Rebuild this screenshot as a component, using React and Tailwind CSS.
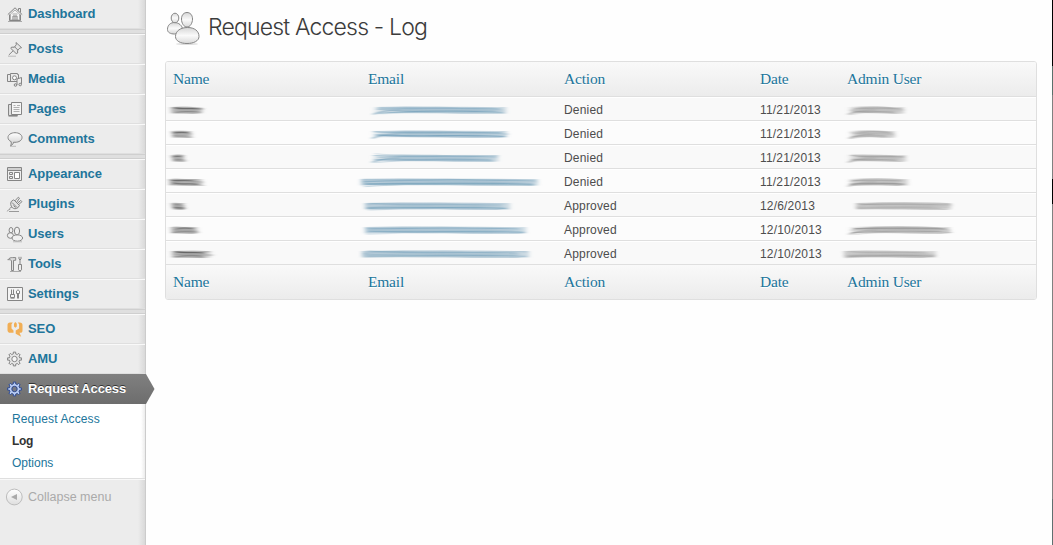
import React from "react";

const stroke = { fill: "none", stroke: "#858585", strokeWidth: 1 };

const icons = {
  dashboard: (
    <g {...stroke}>
      <path fill="#f4f4f4" stroke="#b0b0b0" d="M3.500 14V8L8 4l4.500 4v6z" />
      <path d="M.8 8.600 8 1.800l7.200 6.800M2.500 8.500v6h11v-6M11.500 4.500v-2h2v4" />
      <path d="M6 14.500V10h4v4.500M8 10v4.500" />
      <path stroke="#aaa" d="M1 15.500h14M5.500 8h5" />
    </g>
  ),
  posts: (
    <g {...stroke}>
      <path fill="#e6e6e6" d="m9 1.500 5.600 5.200-1.800.4-2.300 2.300.2 2.600-1.500.6-5.400-5.200.8-1.300 2.700.2 2-2.600z" />
      <path d="M6.200 9.700 1.800 14M7.300 5.500l3.800 3.800" />
      <path stroke="#bbb" d="M1 15.200h8" />
    </g>
  ),
  media: (
    <g {...stroke}>
      <path fill="#e9e9e9" d="M.5 3.500h3v-1h7v1h1v7H.5z" />
      <path d="M3.500 3.500v7" />
      <circle cx="7.500" cy="6.800" r="2" fill="#fff" />
      <path fill="#ededed" d="M10 14V8l4.500-1.500V13" />
      <circle cx="8.500" cy="14" r="1.300" fill="#ddd" />
      <circle cx="13.200" cy="13.500" r="1.300" fill="#ddd" />
    </g>
  ),
  pages: (
    <g {...stroke}>
      <path fill="#ddd" d="M4.500 3.500h-3v11h9v-1.500" />
      <path fill="#f5f5f5" d="M4.500 1.500h10v12h-10z" />
      <path stroke="#b0b0b0" d="M6.500 4.500h2M10 4.500h3M6.500 6.500h6M6.500 8.500h6M6.500 10.500h6M1.500 15.500h9" />
    </g>
  ),
  comments: (
    <g {...stroke}>
      <path fill="url(#menuBubble)" d="M8 1.700c4 0 7 2 7 4.800 0 2.900-3 4.800-7 4.800-.5 0-1 0-1.400-.1-.3 1.500-1.200 2.800-3 3.800.7-1.400.8-2.700.6-4.300C2.200 9.800 1 8.300 1 6.500 1 3.700 4 1.700 8 1.700z" />
      <path stroke="#bbb" d="M3 15.300h6" />
    </g>
  ),
  appearance: (
    <g {...stroke}>
      <path fill="#efefef" d="M.5 1.500h14v13H.5z" />
      <path stroke="#b0b0b0" d="M1 3h13" />
      <path d="M.5 4.500h14" />
      <path fill="#fff" d="M7.500 6.500h5v6h-5z" />
      <path d="M2.500 6.500h3v2h-3zM2.500 10.500h3v2h-3z" />
    </g>
  ),
  plugins: (
    <g {...stroke}>
      <path fill="#e3e3e3" d="M4.500 5.200 6.800 3.800l5.700 5.700-1.600 2.200c-1.900 1.500-4.200 1.300-5.700-.2S3 7 4.500 5.200z" />
      <path d="m8 4.800 3.300-3.600 1.200 1L9.700 6.300M10.500 7.300l3.300-2.900 1.200 1.200-3.500 3.100M5 6.500l5 5M6.500 9.500l2 2" />
      <path stroke="#999" d="M5 11.200c-1.800 0-2.600 1-2 2.200-1.300 0-2.200.8-2.700 2M2 15.500h10" />
    </g>
  ),
  users: (
    <g {...stroke} fill="#f0f0f0">
      <ellipse cx="3.400" cy="9.500" rx="3" ry="2.800" />
      <ellipse cx="4" cy="4.200" rx="1.900" ry="2.700" />
      <ellipse cx="10.300" cy="12" rx="5.300" ry="3.200" />
      <ellipse cx="10" cy="5" rx="2.600" ry="3.900" />
      <path stroke="#bbb" d="M6 15.800h9" />
    </g>
  ),
  tools: (
    <g {...stroke}>
      <path fill="#ddd" d="M.8 3.800C2.300 2 3.800 1.500 5.500 1.600h3.200v2.700H6.500v10.200h-2V4.600C3.300 3.700 2.100 3.400.8 3.800z" />
      <path fill="#ececec" d="M11.500 8.500h3v5.300c0 1.200-3 1.200-3 0z" />
      <path d="M13 8.500V4l1-1V.800M13 4l-1-1V.8" />
      <path stroke="#aaa" d="M3 15.500h11" />
    </g>
  ),
  settings: (
    <g {...stroke}>
      <path fill="#f4f4f4" d="M.5 1.500h15v13H.5z" />
      <path d="M4.500 3.500v5M6.500 3.500v5M3.500 8.500h4v3h-4zM10.500 7.500v5M11.500 7.500v5" />
      <path fill="#fff" d="M9.500 7.500V5L11 3.800 12.500 5v2.500z" />
      <path stroke="#aaa" d="M3.500 12.500h4" />
    </g>
  ),
  seo: (
    <g fill="#f1ae55">
      <path d="M3 1.500h2.800L4.500 3.200v4.300l2 2v2.300H3.500A2.500 2.500 0 0 1 .5 9.300V4A2.500 2.500 0 0 1 3 1.500z" />
      <path d="M10.800 1.500h2A2.700 2.700 0 0 1 15.500 4.200v5a2.500 2.500 0 0 1-2.600 2.600h-.4L14.200 15.800 8.700 12.800V9.600l3.400-2.200V3.200z" />
      <path d="M7 2.500 8.300 1l1.500 1.500v3L8.400 6.800 7 5.500z" />
    </g>
  ),
};

const TEETH = 8;
const gearPath = (() => {
  const pts = [];
  for (let i = 0; i < TEETH; i++) {
    [[-0.270, 5.300], [-0.220, 7], [0.220, 7], [0.270, 5.300]].forEach(([off, r]) => {
      const a = ((i + off) / TEETH) * Math.PI * 2;
      pts.push(`${(7.5 + Math.sin(a) * r).toFixed(2)} ${(8 - Math.cos(a) * r).toFixed(2)}`);
    });
  }
  return `M${pts.join("L")}Z`;
})();

function Gear({ color, fill, hole }) {
  return (
    <g stroke={color} fill={fill} strokeLinejoin="round">
      <path d={gearPath} />
      <circle cx="7.500" cy="8" r="2.700" fill={hole} />
    </g>
  );
}

function MenuIcon({ name }) {
  return (
    <svg viewBox="0 0 16 16" className="ml-[7px] mr-[5px] size-4 shrink-0 overflow-visible">
      <defs>
        <linearGradient id="menuBubble" x1="0" y1="0" x2="0" y2="1">
          <stop offset="0" stopColor="#fff" />
          <stop offset="1" stopColor="#ccc" />
        </linearGradient>
      </defs>
      {name === "gear" && <Gear color="#858585" fill="#e6e6e6" hole="#f6f6f6" />}
      {name === "active" && <Gear color="#2f4a8f" fill="#b7cbf3" hole="#777a85" />}
      {icons[name]}
    </svg>
  );
}

function MenuItem({ icon, label }) {
  return (
    <a className="flex h-[30px] shrink-0 items-center border-t border-b border-t-[#f9f9f9] border-b-[#dfdfdf] text-[13px] font-bold tracking-[-0.05px] text-[#21759b]">
      <MenuIcon name={icon} />
      <span>{label}</span>
    </a>
  );
}

const Separator = () => (
  <div className="h-[5px] shrink-0 border-y border-[#cfcfcf] bg-[#dfdfdf]" />
);

function Sidebar() {
  return (
    <nav className="flex h-full w-[146px] shrink-0 flex-col border-r border-[#cccccc] bg-[#ececec] bg-[linear-gradient(to_left,#d9d9d9,#ececec_7px)]">
      <div className="-mt-px flex shrink-0 flex-col">
        <MenuItem icon="dashboard" label="Dashboard" />
      </div>
      <Separator />
      <MenuItem icon="posts" label="Posts" />
      <MenuItem icon="media" label="Media" />
      <MenuItem icon="pages" label="Pages" />
      <MenuItem icon="comments" label="Comments" />
      <Separator />
      <MenuItem icon="appearance" label="Appearance" />
      <MenuItem icon="plugins" label="Plugins" />
      <MenuItem icon="users" label="Users" />
      <MenuItem icon="tools" label="Tools" />
      <MenuItem icon="settings" label="Settings" />
      <Separator />
      <MenuItem icon="seo" label="SEO" />
      <MenuItem icon="gear" label="AMU" />
      <a className="relative flex h-[30px] w-[146px] shrink-0 items-center bg-linear-to-b from-[#808080] to-[#6d6d6d] text-[13px] font-bold tracking-[-0.14px] text-white [text-shadow:0_-1px_0_#333]">
        <MenuIcon name="active" />
        <span className="whitespace-nowrap">Request Access</span>
        <svg viewBox="0 0 9 30" className="absolute top-0 left-full h-[30px] w-[9px]">
          <defs>
            <linearGradient id="arrowShade" x1="0" y1="0" x2="0" y2="1">
              <stop offset="0" stopColor="#808080" />
              <stop offset="1" stopColor="#6d6d6d" />
            </linearGradient>
          </defs>
          <path d="M0 0 8.500 15 0 30z" fill="url(#arrowShade)" />
        </svg>
      </a>
      <div className="flex h-[75px] shrink-0 flex-col border-b border-[#dfdfdf] bg-white bg-[linear-gradient(to_left,#ececec,#fff_4px)] pt-1 pl-3 text-[12px] leading-[22px] text-[#21759b]">
        <a className="tracking-[0.13px]">Request Access</a>
        <a className="font-bold tracking-[-0.3px] text-[#333]">Log</a>
        <a>Options</a>
      </div>
      <div className="flex h-[35px] shrink-0 items-center border-t border-[#f9f9f9] text-[12.500px] text-[#aaa]">
        <svg viewBox="0 0 18 18" className="ml-[5px] mr-[5px] size-[18px]">
          <defs>
            <linearGradient id="collapseFill" x1="0" y1="0" x2="0" y2="1">
              <stop offset="0" stopColor="#fff" />
              <stop offset="1" stopColor="#dedede" />
            </linearGradient>
          </defs>
          <circle cx="9.300" cy="9" r="7.900" fill="url(#collapseFill)" stroke="#bdbdbd" />
          <path d="M12 6v6L6 9z" fill="#aaa" />
        </svg>
        <span>Collapse menu</span>
      </div>
    </nav>
  );
}

/* A smeared brush stroke that hides private text. `tail` adds a faint sweep at its lower left. */
function Smudge({ left, width, color, seed, dark, wave = 1, tail = false, fadeOut = 0.6 }) {
  const id = `smear${seed}`;
  const fade = `fade${seed}`;
  const lines = [];
  for (let i = 0; i < 6; i++) {
    const r = (n) => Math.abs(Math.sin(seed * 12.9 + i * 7.3 + n * 3.1) * 43758.5) % 1;
    const y = 9.600 + i * 1.100;
    const x0 = 1 + r(1) * Math.min(6, width / 7);
    const x1 = width - r(2) * Math.min(14, width / 3);
    const bend = (r(3) - 0.5) * 3 * wave;
    lines.push(
      <path
        key={i}
        d={`M${x0} ${y + bend} C${width * 0.3} ${y - bend} ${width * 0.6} ${y - wave} ${x1} ${y + 0.3}`}
        stroke={i % 3 === 1 ? dark : color}
        strokeWidth={0.8 + r(5) * 0.7}
        opacity={0.25 + r(4) * 0.35}
      />
    );
  }
  return (
    <svg width={width + 10} height="22" style={{ left }} className="absolute top-0 overflow-visible">
      <defs>
        <filter id={id} x="-10" y="0" width={width + 20} height="22" filterUnits="userSpaceOnUse">
          <feGaussianBlur stdDeviation="1.900 0.600" />
        </filter>
        <linearGradient id={fade} x1="0" x2={width} y1="0" y2="0" gradientUnits="userSpaceOnUse">
          <stop offset="0" stopColor={color} stopOpacity={tail ? 0.2 : 0.9} />
          <stop offset=".25" stopColor={color} />
          <stop offset=".75" stopColor={color} />
          <stop offset="1" stopColor={color} stopOpacity={fadeOut} />
        </linearGradient>
      </defs>
      <g filter={`url(#${id})`} fill="none">
        <path
          d={`M1 12.300 C${width * 0.3} ${12.3 - wave * 1.5} ${width * 0.6} ${12.3 + wave} ${width - 2} 12.300`}
          stroke={`url(#${fade})`}
          strokeWidth="6.500"
          opacity=".7"
        />
        {tail && <path d={`M0 16.500 Q10 12 ${Math.min(28, width * 0.5)} 12`} stroke={color} strokeWidth="1.500" opacity=".8" />}
        {lines}
      </g>
    </svg>
  );
}

const blue = ["#96b5c8", "#5089aa"];
const grey = ["#b0b0b0", "#7d7d7d"];

/* name / email / admin hold the [x offset inside the cell, length] of each smear */
const rows = [
  { name: [4, 34], email: [12, 135], action: "Denied", date: "11/21/2013", admin: [8, 58], tails: true },
  { name: [5, 23], email: [11, 137], action: "Denied", date: "11/21/2013", admin: [9, 48], tails: true },
  { name: [5, 15], email: [11, 128], action: "Denied", date: "11/21/2013", admin: [8, 60], tails: true },
  { name: [2, 37], email: [-1, 180], action: "Denied", date: "11/21/2013", admin: [8, 62], adminTail: true },
  { name: [5, 15], email: [3, 148], action: "Approved", date: "12/6/2013", admin: [15, 98] },
  { name: [4, 30], email: [3, 164], action: "Approved", date: "12/10/2013", admin: [9, 103], adminTail: true },
  { name: [5, 42], email: [0, 170], action: "Approved", date: "12/10/2013", admin: [3, 95] },
];

const gridCols = "grid grid-cols-[195px_196px_196px_87px_1fr]";

function Headings({ className }) {
  return (
    <div className={`${gridCols} ${className} items-center bg-linear-to-b from-[#f9f9f9] to-[#ececec] font-['Liberation_Serif',serif] text-[15.500px] text-[#21759b] [text-shadow:0_1px_0_#fff]`}>
      {["Name", "Email", "Action", "Date", "Admin User"].map((h) => (
        <span key={h} className="pl-[7px] tracking-[-0.2px]">{h}</span>
      ))}
    </div>
  );
}

function LogTable() {
  return (
    <div className="w-[872px] overflow-hidden rounded-[3px] border border-[#dfdfdf]">
      <Headings className="h-[35px] border-b border-[#dfdfdf]" />
      {rows.map((r, i) => (
        <div
          key={i}
          className={`${gridCols} h-6 items-center border-t border-b border-t-white border-b-[#dfdfdf] text-[12px] tracking-[0.18px] text-[#4d4d4d] ${i % 2 ? "bg-[#fcfcfc]" : "bg-[#f9f9f9]"}`}
        >
          <div className="relative h-full">
            <Smudge left={r.name[0]} width={r.name[1]} color="#999999" dark="#333" seed={i + 1} wave={0.8} fadeOut={0.15} />
          </div>
          <div className="relative h-full">
            <Smudge left={r.email[0]} width={r.email[1]} color={blue[0]} dark={blue[1]} seed={i + 11} wave={1.4} tail={r.tails} />
          </div>
          <span className="pt-px pl-[7px]">{r.action}</span>
          <span className="pt-px pl-[7px]">{r.date}</span>
          <div className="relative h-full">
            <Smudge left={r.admin[0]} width={r.admin[1]} color={grey[0]} dark={grey[1]} seed={i + 21} wave={1.3} tail={r.tails || r.adminTail} />
          </div>
        </div>
      ))}
      <Headings className="h-[34px]" />
    </div>
  );
}

function UsersIcon() {
  return (
    <svg viewBox="0 0 36 36" className="size-9 shrink-0">
      <defs>
        <linearGradient id="figure" x1="0" y1="0" x2="0" y2="1">
          <stop offset="0" stopColor="#d6d6d6" />
          <stop offset=".5" stopColor="#fafafa" />
          <stop offset="1" stopColor="#d9d9d9" />
        </linearGradient>
      </defs>
      <ellipse cx="22" cy="34" rx="11" ry="1" fill="#ddd" />
      <g fill="url(#figure)" stroke="#858585">
        <path d="M2.500 19.500c0-4.500 3-7 7-7s8 3 8 7c0 3-3.500 4.500-8 4.500-4 0-7-1.500-7-4.500z" />
        <ellipse cx="10" cy="8" rx="3.800" ry="4.800" />
        <path d="M10.500 26.500c0-5.500 5-9 12-9s11.500 3.500 11.500 9c0 4.500-5.500 7-12 7s-11.500-2.500-11.500-7z" />
        <path d="M16.500 9c0-4 2.300-6.500 5.500-6.500S27.500 5 27.500 9s-2.200 8-5.500 8-5.500-4-5.500-8z" />
      </g>
    </svg>
  );
}

export default function App() {
  return (
    <div className="flex h-[545px] w-[1053px] overflow-hidden bg-[#fefefe] font-['Liberation_Sans',Arial,sans-serif]">
      <Sidebar />
      <main className="flex grow flex-col pl-[19px]">
        <header className="flex h-[61px] shrink-0 items-start pt-[10px]">
          <UsersIcon />
          <h1 className="ml-[7px] text-[23px] leading-[34px] font-light tracking-[-0.82px] text-[#3c3c3c] font-['Inter','Liberation_Sans',sans-serif]">
            Request Access - Log
          </h1>
        </header>
        <LogTable />
      </main>
      <div className="flex w-px shrink-0 flex-col bg-[#808080]">
        <div className="h-[66px] bg-black" />
        <div className="h-[29px] bg-[#5a706b]" />
        <div className="h-[84px]" />
        <div className="h-[25px] bg-black" />
        <div className="h-[295px]" />
        <div className="h-[46px] bg-[#5f6f70]" />
      </div>
    </div>
  );
}
